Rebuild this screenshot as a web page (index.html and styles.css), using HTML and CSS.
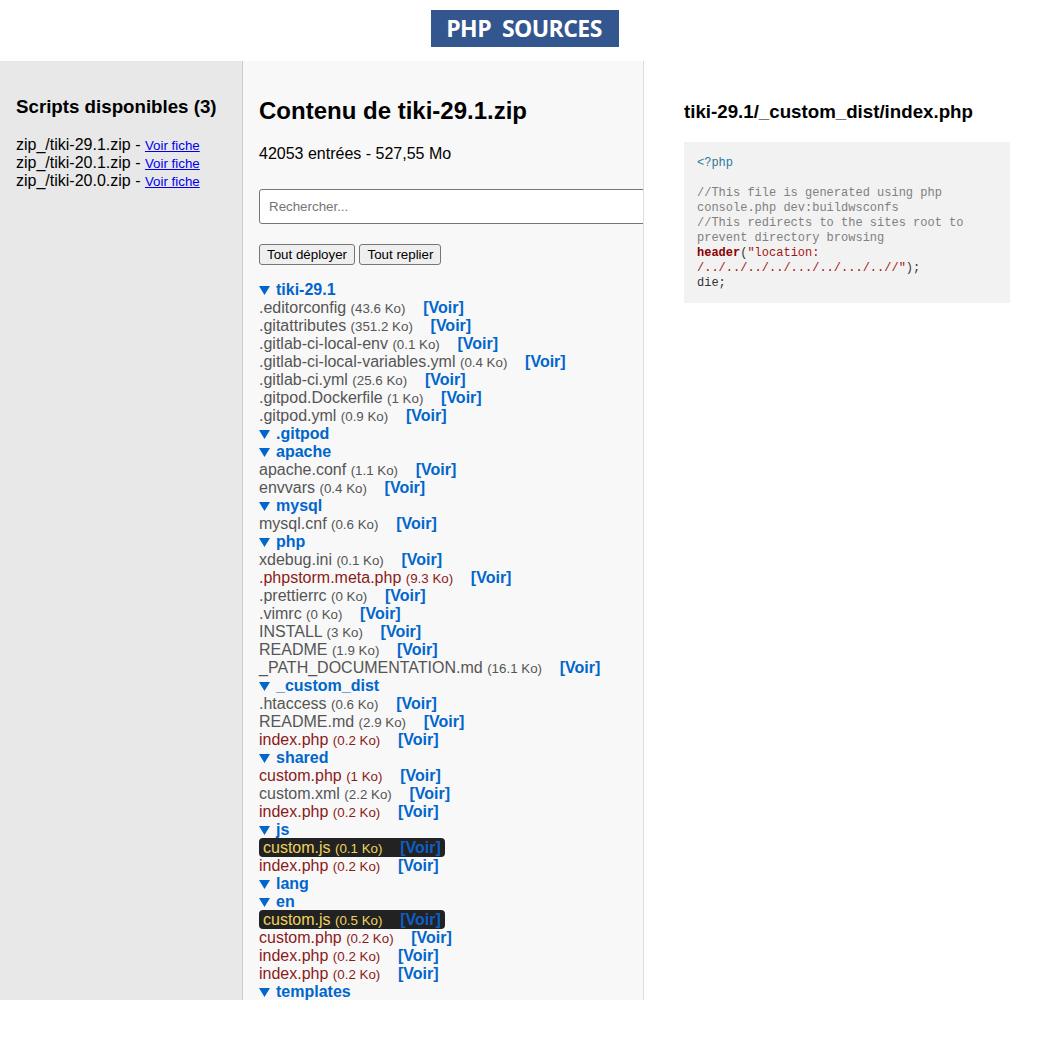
FILE: index.html
```html
<!DOCTYPE html>
<html lang="fr">
<head>
<meta charset="utf-8">
<title>PHP Sources</title>
<link rel="stylesheet" href="styles.css">
</head>
<body>
<header class="top"><div class="logo">PHP&nbsp; SOURCES</div></header>
<main class="panels">
<aside class="scripts">
<h2>Scripts disponibles (3)</h2>
<ul>
<li>zip_/tiki-29.1.zip - <a href="#">Voir fiche</a></li>
<li>zip_/tiki-20.1.zip - <a href="#">Voir fiche</a></li>
<li>zip_/tiki-20.0.zip - <a href="#">Voir fiche</a></li>
</ul>
</aside>
<section class="content">
<h1>Contenu de tiki-29.1.zip</h1>
<p class="stats">42053 entrées - 527,55 Mo</p>
<input class="search" type="text" placeholder="Rechercher...">
<div class="actions"><button>Tout déployer</button> <button>Tout replier</button></div>
<div class="tree">
<div class="dir"><span class="arrow"></span>tiki-29.1</div>
<div class="file">.editorconfig <small>(43.6 Ko)</small><a href="#">[Voir]</a></div>
<div class="file">.gitattributes <small>(351.2 Ko)</small><a href="#">[Voir]</a></div>
<div class="file">.gitlab-ci-local-env <small>(0.1 Ko)</small><a href="#">[Voir]</a></div>
<div class="file">.gitlab-ci-local-variables.yml <small>(0.4 Ko)</small><a href="#">[Voir]</a></div>
<div class="file">.gitlab-ci.yml <small>(25.6 Ko)</small><a href="#">[Voir]</a></div>
<div class="file">.gitpod.Dockerfile <small>(1 Ko)</small><a href="#">[Voir]</a></div>
<div class="file">.gitpod.yml <small>(0.9 Ko)</small><a href="#">[Voir]</a></div>
<div class="dir"><span class="arrow"></span>.gitpod</div>
<div class="dir"><span class="arrow"></span>apache</div>
<div class="file">apache.conf <small>(1.1 Ko)</small><a href="#">[Voir]</a></div>
<div class="file">envvars <small>(0.4 Ko)</small><a href="#">[Voir]</a></div>
<div class="dir"><span class="arrow"></span>mysql</div>
<div class="file">mysql.cnf <small>(0.6 Ko)</small><a href="#">[Voir]</a></div>
<div class="dir"><span class="arrow"></span>php</div>
<div class="file">xdebug.ini <small>(0.1 Ko)</small><a href="#">[Voir]</a></div>
<div class="file php">.phpstorm.meta.php <small>(9.3 Ko)</small><a href="#">[Voir]</a></div>
<div class="file">.prettierrc <small>(0 Ko)</small><a href="#">[Voir]</a></div>
<div class="file">.vimrc <small>(0 Ko)</small><a href="#">[Voir]</a></div>
<div class="file">INSTALL <small>(3 Ko)</small><a href="#">[Voir]</a></div>
<div class="file">README <small>(1.9 Ko)</small><a href="#">[Voir]</a></div>
<div class="file">_PATH_DOCUMENTATION.md <small>(16.1 Ko)</small><a href="#">[Voir]</a></div>
<div class="dir"><span class="arrow"></span>_custom_dist</div>
<div class="file">.htaccess <small>(0.6 Ko)</small><a href="#">[Voir]</a></div>
<div class="file">README.md <small>(2.9 Ko)</small><a href="#">[Voir]</a></div>
<div class="file php">index.php <small>(0.2 Ko)</small><a href="#">[Voir]</a></div>
<div class="dir"><span class="arrow"></span>shared</div>
<div class="file php">custom.php <small>(1 Ko)</small><a href="#">[Voir]</a></div>
<div class="file">custom.xml <small>(2.2 Ko)</small><a href="#">[Voir]</a></div>
<div class="file php">index.php <small>(0.2 Ko)</small><a href="#">[Voir]</a></div>
<div class="dir"><span class="arrow"></span>js</div>
<div class="file"><span class="js">custom.js <small>(0.1 Ko)</small><a href="#">[Voir]</a></span></div>
<div class="file php">index.php <small>(0.2 Ko)</small><a href="#">[Voir]</a></div>
<div class="dir"><span class="arrow"></span>lang</div>
<div class="dir"><span class="arrow"></span>en</div>
<div class="file"><span class="js">custom.js <small>(0.5 Ko)</small><a href="#">[Voir]</a></span></div>
<div class="file php">custom.php <small>(0.2 Ko)</small><a href="#">[Voir]</a></div>
<div class="file php">index.php <small>(0.2 Ko)</small><a href="#">[Voir]</a></div>
<div class="file php">index.php <small>(0.2 Ko)</small><a href="#">[Voir]</a></div>
<div class="dir"><span class="arrow"></span>templates</div>
</div>
</section>
<section class="viewer">
<h3>tiki-29.1/_custom_dist/index.php</h3>
<pre class="code"><span class="tag">&lt;?php</span>

<span class="com">//This file is generated using php
console.php dev:buildwsconfs
//This redirects to the sites root to
prevent directory browsing</span>
<span class="kw">header</span>(<span class="str">"location:
/../../../../.../../.../..//"</span>);
die;</pre>
</section>
</main>
</body>
</html>
```
FILE: styles.css
```css
* { box-sizing: border-box; }
html, body { margin: 0; padding: 0; }
body {
  font-family: "Liberation Sans", Arial, sans-serif;
  font-size: 16px;
  color: #000;
  background: #fff;
  height: 1061px;
}
.top {
  height: 61px;
  display: flex;
  justify-content: center;
  padding-top: 10px;
}
.logo {
  width: 188px;
  height: 37px;
  padding-right: 2px;
  background: #34568f;
  color: #fff;
  font-family: "Open Sans", sans-serif;
  font-weight: 700;
  font-size: 23px;
  line-height: 37px;
  text-align: center;
  white-space: nowrap;
  letter-spacing: -0.55px;
}
.panels {
  display: flex;
  height: 939px;
  overflow: hidden;
}
.scripts {
  width: 243px;
  flex: none;
  background: #e8e8e8;
  border-right: 1px solid #ccc;
  padding: 35px 16px 0;
}
.scripts h2 {
  margin: 0 0 19px;
  font-size: 18.72px;
  line-height: 21px;
  font-weight: 700;
}
.scripts ul { list-style: none; margin: 0; padding: 0; }
.scripts li { line-height: 18px; white-space: nowrap; }
.scripts a { font-size: 13.33px; line-height: 1; color: #0000ee; }
.content {
  width: 401px;
  flex: none;
  background: #f8f8f8;
  border-right: 1px solid #ddd;
  padding: 36px 16px 0;
  overflow: hidden;
}
.content h1 {
  margin: 0 0 20px;
  font-size: 24px;
  line-height: 28px;
  font-weight: 700;
}
.stats { margin: 0 0 26px; line-height: 18px; }
.search {
  display: block;
  width: 440px;
  height: 35px;
  padding: 0 9px 1px;
  border: 1px solid #767676;
  border-radius: 3px;
  background: #fff;
  font: 13.33px "Liberation Sans", Arial, sans-serif;
}
.search::placeholder { color: #757575; }
.actions { margin: 20px 0 16px; height: 21px; }
.actions button {
  height: 21px;
  padding: 0 7px;
  border: 1px solid #767676;
  border-radius: 3px;
  background: #efefef;
  font: 13.33px "Liberation Sans", Arial, sans-serif;
  color: #000;
}
.tree { white-space: nowrap; }
.dir {
  height: 18px;
  line-height: 18px;
  font-weight: 700;
  color: #0066cc;
}
.arrow {
  display: inline-block;
  width: 11px;
  height: 9px;
  margin-right: 6px;
  background: currentColor;
  clip-path: polygon(0 0, 100% 0, 50% 100%);
}
.file { height: 18px; line-height: 18px; color: #555; }
.file small { font-size: 13.33px; }
.file a {
  margin-left: 17.7px;
  font-weight: 700;
  color: #0066cc;
  text-decoration: none;
}
.php { color: #8b1a1a; }
.js {
  background: #222;
  color: #eed35f;
  padding: 1px 4px;
  border-radius: 4px;
}
.js a { color: #0d5fc4; }
.viewer {
  flex: 1;
  min-width: 0;
  padding: 40px 40px 0;
}
.viewer h3 {
  margin: 0 0 19px;
  font-size: 18.72px;
  line-height: 22px;
  font-weight: 700;
  white-space: nowrap;
}
.code {
  margin: 0;
  padding: 14px 13px 12px;
  background: #f2f2f2;
  font-family: "Liberation Mono", "Courier New", monospace;
  font-size: 12px;
  line-height: 15px;
  color: #333;
  white-space: pre-wrap;
}
.tag { color: #2a7a9b; }
.com { color: #808080; }
.kw { color: #8b0000; font-weight: 700; }
.str { color: #a31515; }
```
